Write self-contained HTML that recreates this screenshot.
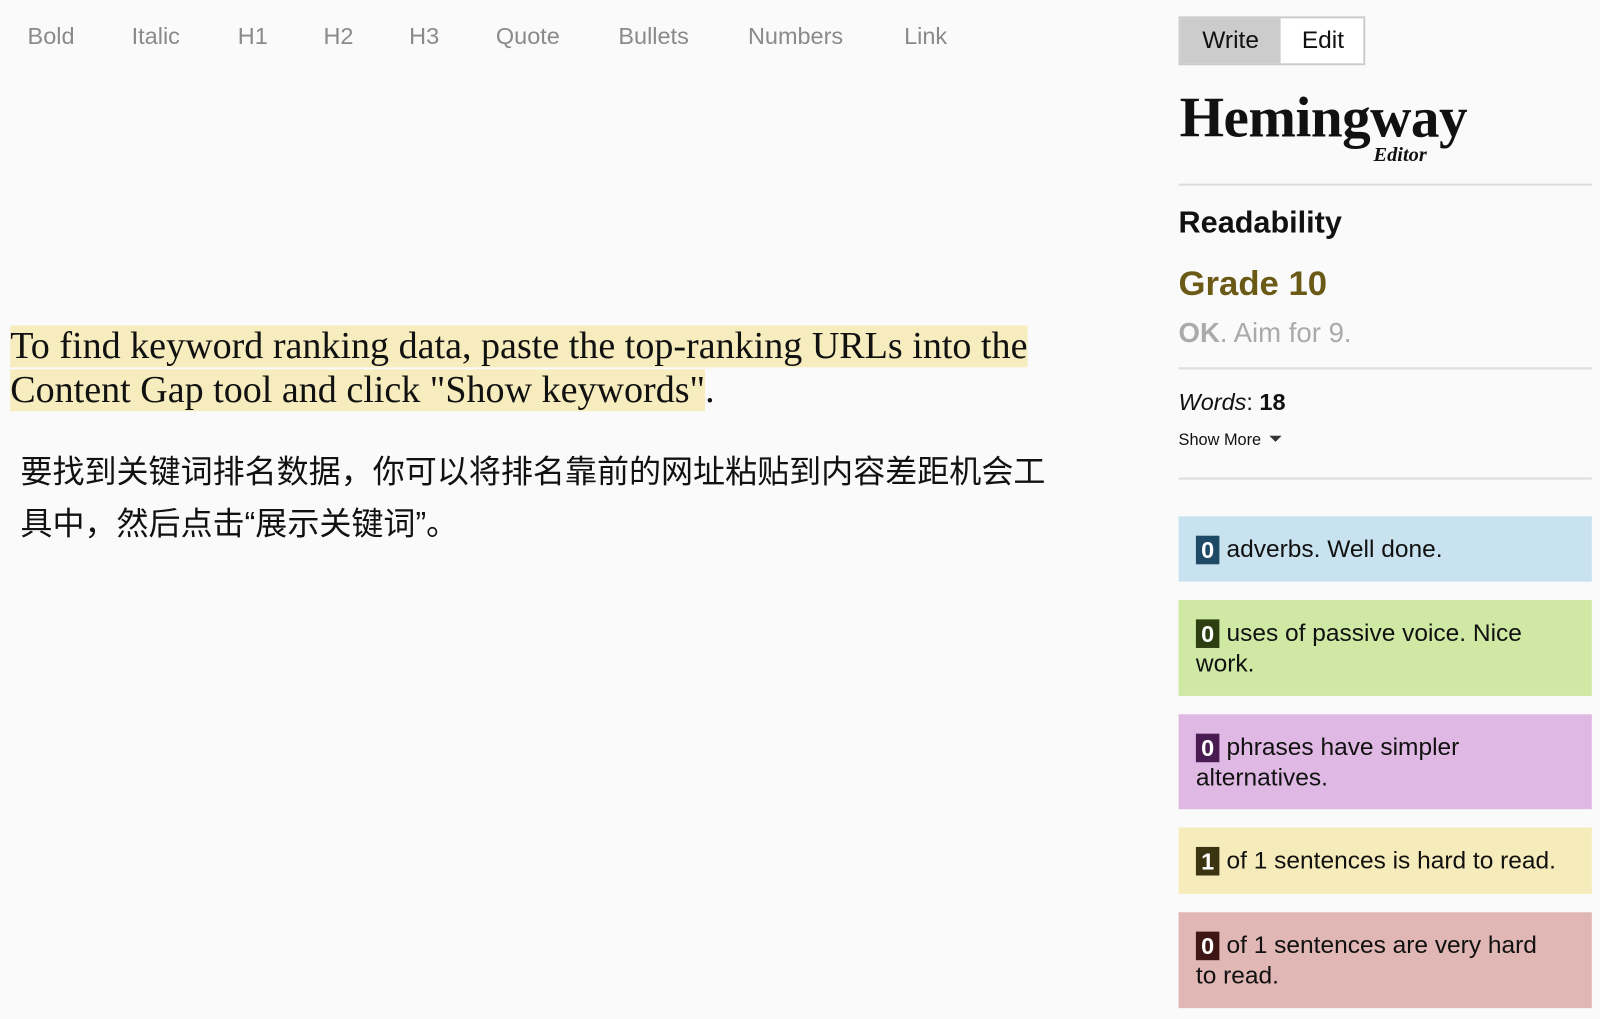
<!DOCTYPE html>
<html><head><meta charset="utf-8"><style>
body{margin:0;width:1600px;height:1019px;background:#fafafa;overflow:hidden;font-family:"Liberation Sans",Arial,sans-serif;}
#w{position:absolute;left:0;top:0;width:1568px;height:999px;transform:scale(1.0204);transform-origin:0 0}
.a{position:absolute;white-space:nowrap}
.tb{top:22px;font-size:23px;color:#8a8a8a}
.hl{background:#f6ecbd}
.box{position:absolute;left:1155px;width:405px;font-size:24px;color:#111;box-sizing:border-box;padding:18px 40px 0 17px;line-height:30px}
.n{display:inline-block;width:23px;height:28px;line-height:28px;text-align:center;color:#fff;font-size:23px;font-weight:bold;vertical-align:-1px;margin-right:7px}
hr{position:absolute;left:1155px;width:405px;border:0;border-top:2px solid #ddd;margin:0}
</style></head><body><div id="w">
<div class="a tb" style="left:27px">Bold</div>
<div class="a tb" style="left:129px">Italic</div>
<div class="a tb" style="left:233px">H1</div>
<div class="a tb" style="left:317px">H2</div>
<div class="a tb" style="left:401px">H3</div>
<div class="a tb" style="left:486px">Quote</div>
<div class="a tb" style="left:606px">Bullets</div>
<div class="a tb" style="left:733px">Numbers</div>
<div class="a tb" style="left:886px">Link</div>

<div class="a" style="left:10px;top:318px;font-family:'Liberation Serif',serif;font-size:37.3px;line-height:43px;color:#111">
<span class="hl">To find keyword ranking data, paste the top-ranking URLs into the</span><br><span class="hl">Content Gap tool and click "Show keywords"</span>.</div>

<div class="a" style="left:20px;top:437px;font-family:'Liberation Sans','Noto Sans CJK SC',sans-serif;font-size:31.4px;line-height:51px;color:#111">要找到关键词排名数据，你可以将排名靠前的网址粘贴到内容差距机会工<br>具中，然后点击“展示关键词”。</div>

<div class="a" style="left:1155px;top:16px;width:183px;height:48px;border:2px solid #ccc;box-sizing:border-box;background:#fff;font-size:24px">
<div style="position:absolute;left:0;top:0;width:98px;height:44px;background:#ccc;text-align:center;line-height:44px;color:#111">Write</div>
<div style="position:absolute;left:98px;top:0;width:83px;height:44px;text-align:center;line-height:44px;color:#111">Edit</div></div>

<div class="a" style="left:1156px;top:84px;font-family:'Liberation Serif',serif;font-weight:bold;font-size:56px;color:#111;letter-spacing:-0.5px">Hemingway</div>
<div class="a" style="left:1346px;top:141px;font-family:'Liberation Serif',serif;font-weight:bold;font-style:italic;font-size:20px;color:#111">Editor</div>
<hr style="top:180px">
<div class="a" style="left:1155px;top:202px;font-size:30px;font-weight:bold;color:#111">Readability</div>
<div class="a" style="left:1155px;top:259px;font-size:34px;font-weight:bold;color:#6b5a16">Grade 10</div>
<div class="a" style="left:1155px;top:311px;font-size:27px;color:#aaa"><b>OK</b>. Aim for 9.</div>
<hr style="top:360px">
<div class="a" style="left:1155px;top:381px;font-size:23px;color:#111"><i>Words</i>: <b>18</b></div>
<div class="a" style="left:1155px;top:423px;font-size:16px;color:#111">Show More <span style="display:inline-block;border-left:6px solid transparent;border-right:6px solid transparent;border-top:6px solid #333;vertical-align:3px;margin-left:4px"></span></div>
<hr style="top:468px">

<div class="box" style="top:506px;height:64px;background:#c9e2f0"><span class="n" style="background:#1e4a66">0</span>adverbs. Well done.</div>
<div class="box" style="top:588px;height:94px;background:#cfe9a4"><span class="n" style="background:#2d3f10">0</span>uses of passive voice. Nice work.</div>
<div class="box" style="top:700px;height:93px;background:#dfb9e3"><span class="n" style="background:#4a1a52">0</span>phrases have simpler alternatives.</div>
<div class="box" style="top:811px;height:65px;background:#f6ebbb;padding-right:0"><span class="n" style="background:#3b3410">1</span>of 1 sentences is hard to read.</div>
<div class="box" style="top:894px;height:94px;background:#e0b7b5"><span class="n" style="background:#3f1616">0</span>of 1 sentences are very hard to read.</div>
</div></body></html>
